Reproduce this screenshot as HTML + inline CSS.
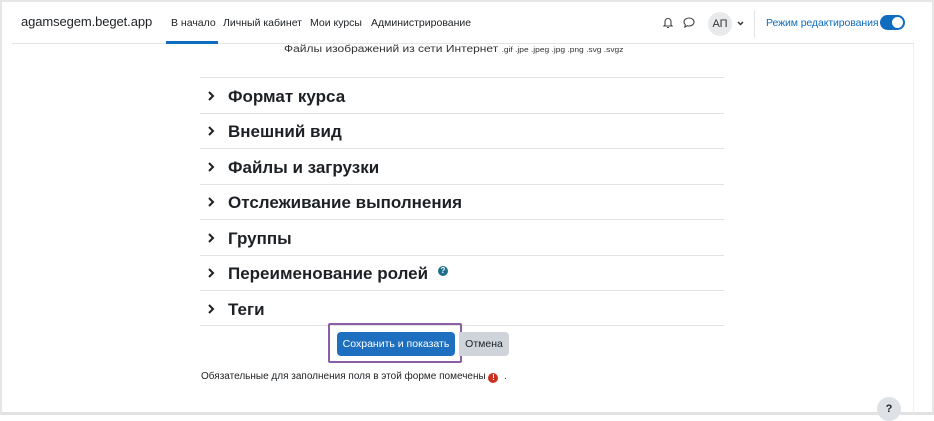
<!DOCTYPE html>
<html><head><meta charset="utf-8"><style>
*{box-sizing:border-box;margin:0;padding:0}
body{width:934px;height:415px;overflow:hidden;background:#fff;font-family:"Liberation Sans",sans-serif;color:#1d2125;position:relative}
.frame{position:absolute;left:0;top:0;width:934px;height:415px;border:2px solid #e6e6e6;border-bottom:3px solid #e2e2e2}
.hline{position:absolute;left:12px;width:902px;top:43px;height:1px;background:#e4e4e4}
.vline{position:absolute;left:913px;top:44px;width:1px;height:369px;background:#f0f0f0}
.a{position:absolute;white-space:nowrap}
.brand{left:21px;top:14px;font-size:13px;letter-spacing:-0.1px;color:#1d2125}
.nav{top:17px;font-size:10.5px;color:#1d2125}
.sec{position:absolute;left:200px;width:524px;height:1px;background:#e3e3e3}
.t{position:absolute;left:228px;font-size:17px;font-weight:bold;color:#1d2125;white-space:nowrap}
.chev{position:absolute;left:207px;width:8px;height:10px}
</style></head><body>
<div class="frame"></div>
<div class="hline"></div>
<div class="vline"></div>
<div class="a brand">agamsegem.beget.app</div>
<div class="a nav" style="left:171px">В начало</div>
<div style="position:absolute;left:166px;top:41px;width:52px;height:3px;background:#0f6cbf"></div>
<div class="a nav" style="left:223px">Личный кабинет</div>
<div class="a nav" style="left:310px">Мои курсы</div>
<div class="a nav" style="left:371px">Администрирование</div>
<svg class="a" style="left:662px;top:16px" width="12" height="13" viewBox="0 0 12 13"><path d="M3 9V5.5a3 3 0 0 1 6 0V9l1 1H2zM5 11.5h2" fill="none" stroke="#444" stroke-width="1.1"/></svg>
<svg class="a" style="left:683px;top:17px" width="12" height="11" viewBox="0 0 12 11"><path d="M6 1C3 1 1 2.8 1 5c0 1.1.5 2 1.3 2.7L1.8 10l2.6-1.3C4.9 8.9 5.4 9 6 9c3 0 5-1.8 5-4S9 1 6 1z" fill="none" stroke="#444" stroke-width="1.1"/></svg>
<div class="a" style="left:708px;top:12px;width:24px;height:24px;border-radius:50%;background:#e8e9eb;font-size:11px;line-height:24px;text-align:center;color:#333">АП</div>
<svg class="a" style="left:737px;top:21px" width="7" height="5" viewBox="0 0 7 5"><path d="M1 1l2.5 2.5L6 1" fill="none" stroke="#333" stroke-width="1.5"/></svg>
<div style="position:absolute;left:754px;top:10px;width:1px;height:28px;background:#e3e3e3"></div>
<div class="a" style="left:766px;top:17px;font-size:10.5px;letter-spacing:-0.1px;color:#0f6cbf">Режим редактирования</div>
<div class="a" style="left:880px;top:15px;width:25px;height:15px;border-radius:8px;background:#0f6cbf"><div style="position:absolute;right:2px;top:2px;width:11px;height:11px;border-radius:50%;background:#fff"></div></div>
<div class="a" style="left:284px;top:44px;font-size:10px;color:#333;transform:scaleX(1.2);transform-origin:0 0">Файлы изображений из сети Интернет <span style="font-size:7px">.gif .jpe .jpeg .jpg .png .svg .svgz</span></div>
<div class="sec" style="top:77px"></div>
<div class="sec" style="top:113px"></div>
<div class="sec" style="top:148px"></div>
<div class="sec" style="top:184px"></div>
<div class="sec" style="top:219px"></div>
<div class="sec" style="top:255px"></div>
<div class="sec" style="top:290px"></div>
<div class="sec" style="top:325px"></div>
<svg class="chev" style="top:91px" viewBox="0 0 8 10"><path d="M2 1l4 4-4 4" fill="none" stroke="#1d2125" stroke-width="2"/></svg><div class="t" style="top:87px">Формат курса</div>
<svg class="chev" style="top:126px" viewBox="0 0 8 10"><path d="M2 1l4 4-4 4" fill="none" stroke="#1d2125" stroke-width="2"/></svg><div class="t" style="top:122px">Внешний вид</div>
<svg class="chev" style="top:162px" viewBox="0 0 8 10"><path d="M2 1l4 4-4 4" fill="none" stroke="#1d2125" stroke-width="2"/></svg><div class="t" style="top:158px">Файлы и загрузки</div>
<svg class="chev" style="top:197px" viewBox="0 0 8 10"><path d="M2 1l4 4-4 4" fill="none" stroke="#1d2125" stroke-width="2"/></svg><div class="t" style="top:193px">Отслеживание выполнения</div>
<svg class="chev" style="top:233px" viewBox="0 0 8 10"><path d="M2 1l4 4-4 4" fill="none" stroke="#1d2125" stroke-width="2"/></svg><div class="t" style="top:229px">Группы</div>
<svg class="chev" style="top:268px" viewBox="0 0 8 10"><path d="M2 1l4 4-4 4" fill="none" stroke="#1d2125" stroke-width="2"/></svg><div class="t" style="top:264px">Переименование ролей</div>
<div class="a" style="left:438px;top:266px;width:10px;height:10px;border-radius:50%;background:#1d6f8b;color:#fff;font-size:8px;line-height:10px;text-align:center;font-weight:bold">?</div>
<svg class="chev" style="top:304px" viewBox="0 0 8 10"><path d="M2 1l4 4-4 4" fill="none" stroke="#1d2125" stroke-width="2"/></svg><div class="t" style="top:300px">Теги</div>
<div class="a" style="left:328px;top:323px;width:134px;height:40px;border:2px solid #8a5fa6;border-radius:2px"></div>
<div class="a" style="left:337px;top:332px;width:118px;height:24px;border-radius:4px;background:#1f6fc0;color:#fff;font-size:10.5px;line-height:24px;text-align:center">Сохранить и показать</div>
<div class="a" style="left:459px;top:332px;width:50px;height:24px;border-radius:0 4px 4px 0;background:#ced4da;color:#1d2125;font-size:10.5px;line-height:24px;text-align:center">Отмена</div>
<div class="a" style="left:201px;top:371px;font-size:10px;color:#1d2125">Обязательные для заполнения поля в этой форме помечены <span style="display:inline-block;width:10px;height:10px;border-radius:50%;background:#ca3120;color:#fff;font-size:8px;line-height:10px;text-align:center;font-weight:bold;vertical-align:-1px">!</span> &nbsp;.</div>
<div class="a" style="left:877px;top:397px;width:24px;height:24px;border-radius:50%;background:#dee2e6;font-size:11px;font-weight:bold;text-align:center;line-height:24px">?</div>
</body></html>
